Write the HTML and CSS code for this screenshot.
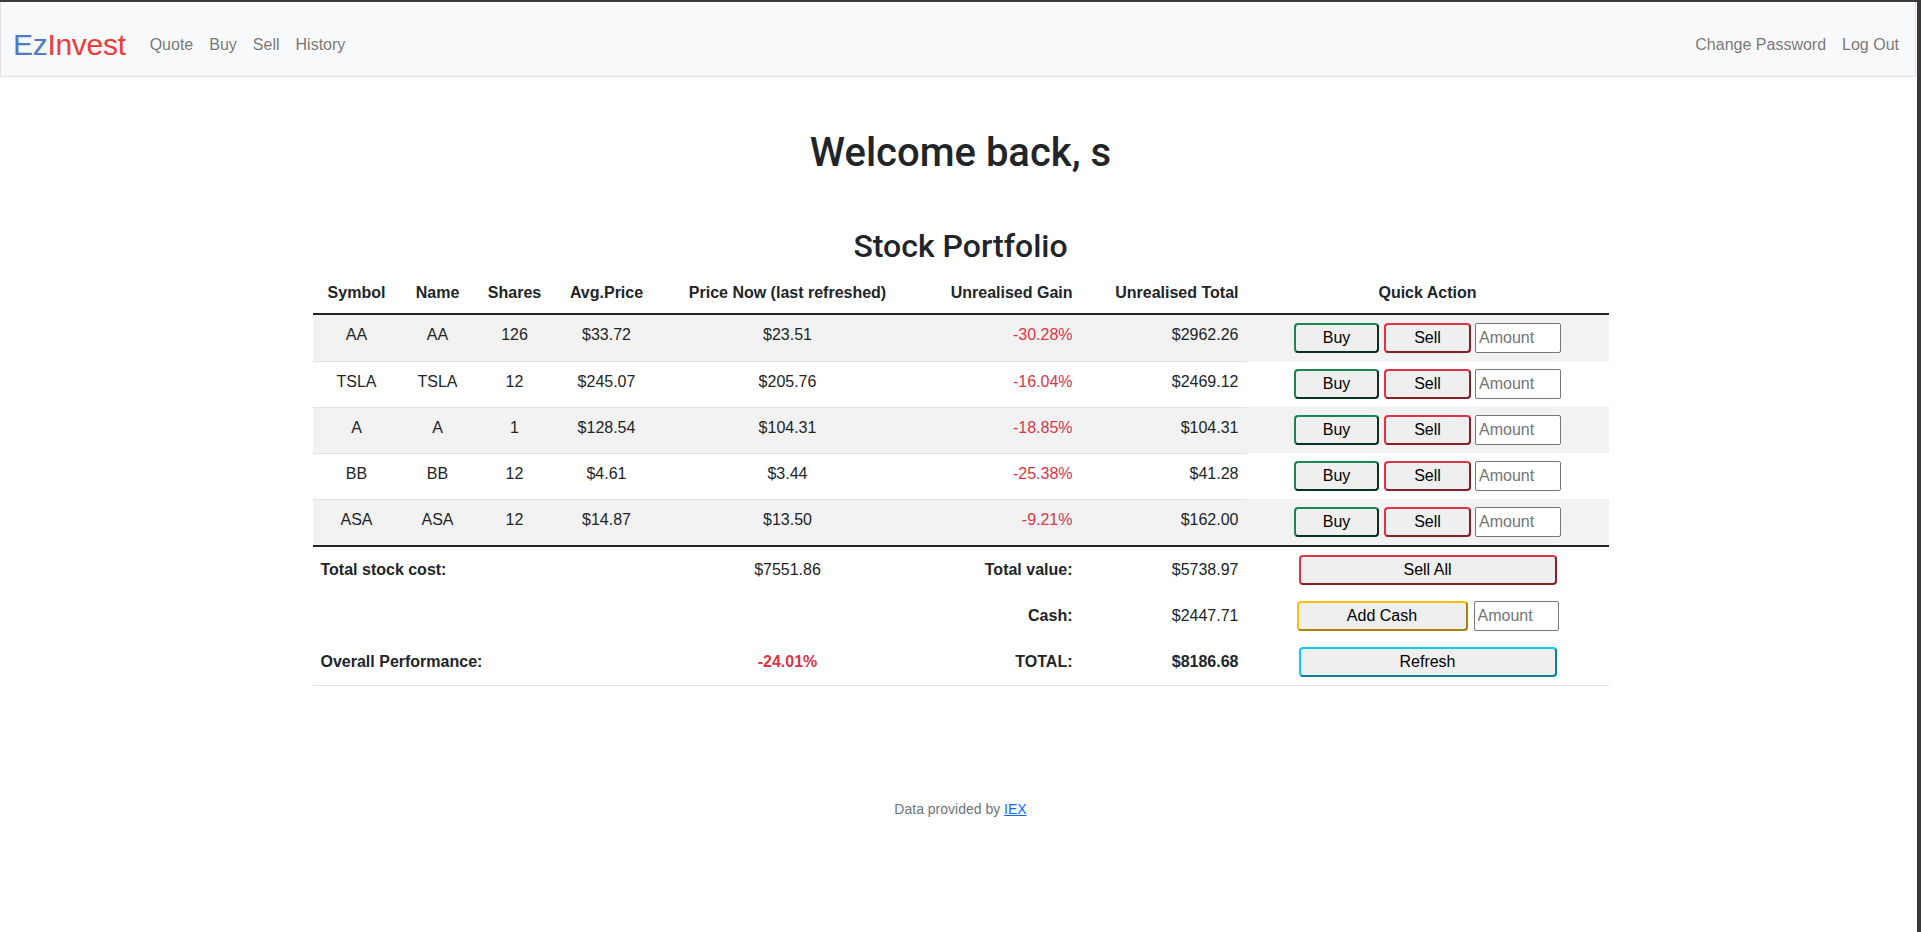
FILE: index.html
```html
<!DOCTYPE html>
<html lang="en">
<head>
<meta charset="utf-8">
<title>EzInvest: Portfolio</title>
<link rel="stylesheet" href="styles.css">
</head>
<body>
<div class="frame">
  <nav class="navbar">
    <div class="nav-left">
      <a class="brand" href="#"><span class="brand-ez">Ez</span><span class="brand-invest">Invest</span></a>
      <a class="nav-link" href="#">Quote</a>
      <a class="nav-link" href="#">Buy</a>
      <a class="nav-link" href="#">Sell</a>
      <a class="nav-link" href="#">History</a>
    </div>
    <div class="nav-right">
      <a class="nav-link" href="#">Change Password</a>
      <a class="nav-link" href="#">Log Out</a>
    </div>
  </nav>

  <main class="container">
    <h1 class="welcome">Welcome back, s</h1>
    <h2 class="title">Stock Portfolio</h2>
    <table class="portfolio">
      <colgroup>
        <col class="c-sym"><col class="c-name"><col class="c-shares"><col class="c-avg">
        <col class="c-now"><col class="c-gain"><col class="c-total"><col class="c-action">
      </colgroup>
      <thead>
        <tr>
          <th class="center">Symbol</th>
          <th class="center">Name</th>
          <th class="center">Shares</th>
          <th class="center">Avg.Price</th>
          <th class="center">Price Now (last refreshed)</th>
          <th class="right">Unrealised Gain</th>
          <th class="right">Unrealised Total</th>
          <th class="center">Quick Action</th>
        </tr>
      </thead>
      <tbody>
        <tr class="odd">
          <td class="center">AA</td><td class="center">AA</td><td class="center">126</td><td class="center">$33.72</td>
          <td class="center">$23.51</td><td class="right loss">-30.28%</td><td class="right">$2962.26</td>
          <td class="action"><div class="quick"><button class="btn btn-buy">Buy</button><button class="btn btn-sell">Sell</button><input class="amount" type="text" placeholder="Amount"></div></td>
        </tr>
        <tr>
          <td class="center">TSLA</td><td class="center">TSLA</td><td class="center">12</td><td class="center">$245.07</td>
          <td class="center">$205.76</td><td class="right loss">-16.04%</td><td class="right">$2469.12</td>
          <td class="action"><div class="quick"><button class="btn btn-buy">Buy</button><button class="btn btn-sell">Sell</button><input class="amount" type="text" placeholder="Amount"></div></td>
        </tr>
        <tr class="odd">
          <td class="center">A</td><td class="center">A</td><td class="center">1</td><td class="center">$128.54</td>
          <td class="center">$104.31</td><td class="right loss">-18.85%</td><td class="right">$104.31</td>
          <td class="action"><div class="quick"><button class="btn btn-buy">Buy</button><button class="btn btn-sell">Sell</button><input class="amount" type="text" placeholder="Amount"></div></td>
        </tr>
        <tr>
          <td class="center">BB</td><td class="center">BB</td><td class="center">12</td><td class="center">$4.61</td>
          <td class="center">$3.44</td><td class="right loss">-25.38%</td><td class="right">$41.28</td>
          <td class="action"><div class="quick"><button class="btn btn-buy">Buy</button><button class="btn btn-sell">Sell</button><input class="amount" type="text" placeholder="Amount"></div></td>
        </tr>
        <tr class="odd">
          <td class="center">ASA</td><td class="center">ASA</td><td class="center">12</td><td class="center">$14.87</td>
          <td class="center">$13.50</td><td class="right loss">-9.21%</td><td class="right">$162.00</td>
          <td class="action"><div class="quick"><button class="btn btn-buy">Buy</button><button class="btn btn-sell">Sell</button><input class="amount" type="text" placeholder="Amount"></div></td>
        </tr>
      </tbody>
      <tfoot>
        <tr>
          <td colspan="4" class="bold">Total stock cost:</td>
          <td class="center">$7551.86</td>
          <td class="right bold">Total value:</td>
          <td class="right">$5738.97</td>
          <td class="action"><div class="quick"><button class="btn btn-sell btn-wide">Sell All</button></div></td>
        </tr>
        <tr>
          <td colspan="5"></td>
          <td class="right bold">Cash:</td>
          <td class="right">$2447.71</td>
          <td class="action"><div class="quick quick-cash"><button class="btn btn-cash">Add Cash</button><input class="amount" type="text" placeholder="Amount"></div></td>
        </tr>
        <tr class="last">
          <td colspan="4" class="bold">Overall Performance:</td>
          <td class="center bold loss">-24.01%</td>
          <td class="right bold">TOTAL:</td>
          <td class="right bold">$8186.68</td>
          <td class="action"><div class="quick"><button class="btn btn-refresh btn-wide">Refresh</button></div></td>
        </tr>
      </tfoot>
    </table>
  </main>

  <footer class="footer">Data provided by <a href="#">IEX</a></footer>
</div>
</body>
</html>
```

FILE: styles.css
```css
html, body {
  margin: 0;
  padding: 0;
  background: #ffffff;
}

body {
  font-family: "Liberation Sans", Arial, sans-serif;
  font-size: 16px;
  line-height: 1.5;
  color: #212529;
}

.frame {
  min-height: 930px;
  border-top: 2px solid #3b3b3b;
  box-sizing: border-box;
}

/* window edge drawn over the right side of the page */
.frame::after {
  content: "";
  position: fixed;
  top: 0;
  right: 0;
  bottom: 0;
  width: 4px;
  background: #3b3836;
}

/* ---------- navbar ---------- */
.navbar {
  display: flex;
  justify-content: space-between;
  align-items: center;
  background: #f8f9fa;
  border: 1px solid #dee2e6;
  border-top: 0;
  padding: 14px 8px 2px 12px;
  margin-right: 5px;
}

.nav-left, .nav-right {
  display: flex;
  align-items: center;
}

.brand {
  font-size: 30px;
  letter-spacing: -0.3px;
  line-height: 48px;
  padding: 5px 0;
  margin-right: 16px;
  text-decoration: none;
}

.brand-ez { color: #4f7bc0; }
.brand-invest { color: #ec3c3c; }

.nav-link {
  padding: 8px;
  color: rgba(0, 0, 0, 0.55);
  text-decoration: none;
  font-size: 16px;
  line-height: 24px;
}

/* ---------- main ---------- */
.container {
  width: 1296px;
  margin: 0 auto;
}

.welcome {
  font-family: Roboto, "Liberation Sans", sans-serif;
  font-size: 40px;
  line-height: 48px;
  font-weight: 500;
  text-align: center;
  margin: 52px 0 50px;
}

.title {
  font-family: Roboto, "Liberation Sans", sans-serif;
  font-size: 32px;
  line-height: 38px;
  font-weight: 500;
  text-align: center;
  margin: 0 0 8px;
}

/* ---------- table ---------- */
.portfolio {
  width: 1296px;
  table-layout: fixed;
  border-collapse: collapse;
}

.c-sym { width: 88px; }
.c-name { width: 74px; }
.c-shares { width: 80px; }
.c-avg { width: 104px; }
.c-now { width: 258px; }
.c-gain { width: 164px; }
.c-total { width: 166px; }
.c-action { width: 362px; }

.portfolio th,
.portfolio td {
  padding: 8px;
  vertical-align: top;
  line-height: 24px;
}

.portfolio th {
  font-weight: 700;
}

.portfolio thead tr {
  border-bottom: 2px solid #212529;
}

.portfolio tbody td {
  border-bottom: 1px solid #dee2e6;
}

.portfolio tbody td.action {
  border-bottom: 0;
}

.portfolio tbody tr:last-child td {
  border-bottom: 0;
}

.portfolio tbody tr.odd td {
  background: #f2f2f2;
}

.portfolio tfoot {
  border-top: 2px solid #212529;
}

.portfolio tfoot td {
  vertical-align: middle;
  border-bottom: 0;
}

.portfolio tfoot tr.last td {
  border-bottom: 1px solid #dee2e6;
}

.center { text-align: center; }
.right { text-align: right; }
.bold { font-weight: 700; }
.loss { color: #dc3545; }

.quick {
  display: flex;
  justify-content: center;
  gap: 4px;
}

.quick-cash {
  gap: 6px;
}

.btn {
  box-sizing: border-box;
  height: 30px;
  font-family: inherit;
  font-size: 16px;
  line-height: 24px;
  color: #000000;
  background: #efefef;
  border-width: 2px;
  border-style: outset;
  border-radius: 4px;
  padding: 0 6px;
}

.btn-buy { width: 85px; border-color: #198754; margin-right: 1px; }
.btn-sell { width: 87px; border-color: #dc3545; }
.btn-cash { width: 171px; border-color: #ffc107; }
.btn-refresh { border-color: #0dcaf0; }
.btn-wide { width: 258px; }

.amount {
  box-sizing: border-box;
  width: 86px;
  height: 30px;
  font-family: inherit;
  font-size: 16px;
  padding: 1px 3px;
  border: 1px solid #767676;
  border-radius: 2px;
  background: #ffffff;
  color: #212529;
}

.quick-cash .amount {
  width: 85px;
}

.amount::placeholder {
  color: #757575;
}

/* ---------- footer ---------- */
.footer {
  text-align: center;
  font-size: 14px;
  line-height: 21px;
  color: #6c757d;
  margin-top: 113px;
}

.footer a {
  color: #0d6efd;
  text-decoration: underline;
}
```
